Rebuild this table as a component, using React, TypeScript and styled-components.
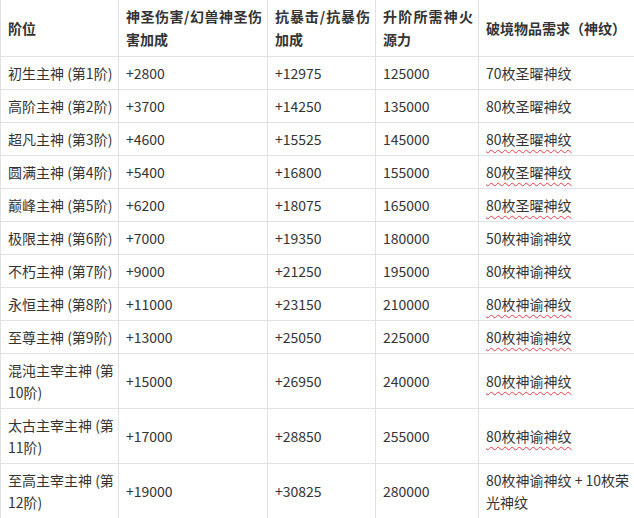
import React from 'react';
import styled, { createGlobalStyle } from 'styled-components';

const GlobalStyle = createGlobalStyle`
  html, body {
    margin: 0;
    padding: 0;
    background: #fff;
  }
  body {
    font-family: "Noto Sans CJK SC", "Noto Sans", sans-serif;
    color: #333;
  }
`;

const Table = styled.table`
  width: 634px;
  border-collapse: collapse;
  table-layout: fixed;
  font-size: 14px;
  line-height: 22px;
`;

const Col = styled.col<{ $w: number }>`
  width: ${({ $w }) => $w}px;
`;

const HeadCell = styled.th`
  box-sizing: border-box;
  padding: 5px 5px 5px 7px;
  border: 1px solid #e2e2e2;
  border-top: none;
  font-weight: 700;
  text-align: justify;
  vertical-align: middle;
  line-height: 23px;
  color: #333;
`;

const Cell = styled.td`
  box-sizing: border-box;
  padding: 5px 4px 5px 7px;
  border: 1px solid #e2e2e2;
  vertical-align: middle;
  color: #333;
`;

const Item = styled.span<{ $flag?: boolean }>`
  text-decoration: ${({ $flag }) => ($flag ? 'underline wavy #e8394a' : 'none')};
  text-decoration-thickness: 1px;
  text-underline-offset: 4px;
`;

type Row = {
  tier: string;
  holy: string;
  resist: string;
  fire: string;
  item: string;
  flag?: boolean;
};

const rows: Row[] = [
  { tier: '初生主神 (第1阶)', holy: '+2800', resist: '+12975', fire: '125000', item: '70枚圣曜神纹' },
  { tier: '高阶主神 (第2阶)', holy: '+3700', resist: '+14250', fire: '135000', item: '80枚圣曜神纹' },
  { tier: '超凡主神 (第3阶)', holy: '+4600', resist: '+15525', fire: '145000', item: '80枚圣曜神纹', flag: true },
  { tier: '圆满主神 (第4阶)', holy: '+5400', resist: '+16800', fire: '155000', item: '80枚圣曜神纹', flag: true },
  { tier: '巅峰主神 (第5阶)', holy: '+6200', resist: '+18075', fire: '165000', item: '80枚圣曜神纹', flag: true },
  { tier: '极限主神 (第6阶)', holy: '+7000', resist: '+19350', fire: '180000', item: '50枚神谕神纹' },
  { tier: '不朽主神 (第7阶)', holy: '+9000', resist: '+21250', fire: '195000', item: '80枚神谕神纹' },
  { tier: '永恒主神 (第8阶)', holy: '+11000', resist: '+23150', fire: '210000', item: '80枚神谕神纹', flag: true },
  { tier: '至尊主神 (第9阶)', holy: '+13000', resist: '+25050', fire: '225000', item: '80枚神谕神纹', flag: true },
  { tier: '混沌主宰主神 (第10阶)', holy: '+15000', resist: '+26950', fire: '240000', item: '80枚神谕神纹', flag: true },
  { tier: '太古主宰主神 (第11阶)', holy: '+17000', resist: '+28850', fire: '255000', item: '80枚神谕神纹', flag: true },
  { tier: '至高主宰主神 (第12阶)', holy: '+19000', resist: '+30825', fire: '280000', item: '80枚神谕神纹 + 10枚荣光神纹' },
];

const App: React.FC = () => (
  <>
    <GlobalStyle />
    <Table>
      <colgroup>
        <Col $w={118} />
        <Col $w={149} />
        <Col $w={108} />
        <Col $w={103} />
        <Col $w={156} />
      </colgroup>
      <thead>
        <tr>
          <HeadCell>阶位</HeadCell>
          <HeadCell>神圣伤害/幻兽神圣伤害加成</HeadCell>
          <HeadCell>抗暴击/抗暴伤加成</HeadCell>
          <HeadCell>升阶所需神火源力</HeadCell>
          <HeadCell>破境物品需求（神纹）</HeadCell>
        </tr>
      </thead>
      <tbody>
        {rows.map((r) => (
          <tr key={r.tier}>
            <Cell>{r.tier}</Cell>
            <Cell>{r.holy}</Cell>
            <Cell>{r.resist}</Cell>
            <Cell>{r.fire}</Cell>
            <Cell>
              <Item $flag={r.flag}>{r.item}</Item>
            </Cell>
          </tr>
        ))}
      </tbody>
    </Table>
  </>
);

export default App;
